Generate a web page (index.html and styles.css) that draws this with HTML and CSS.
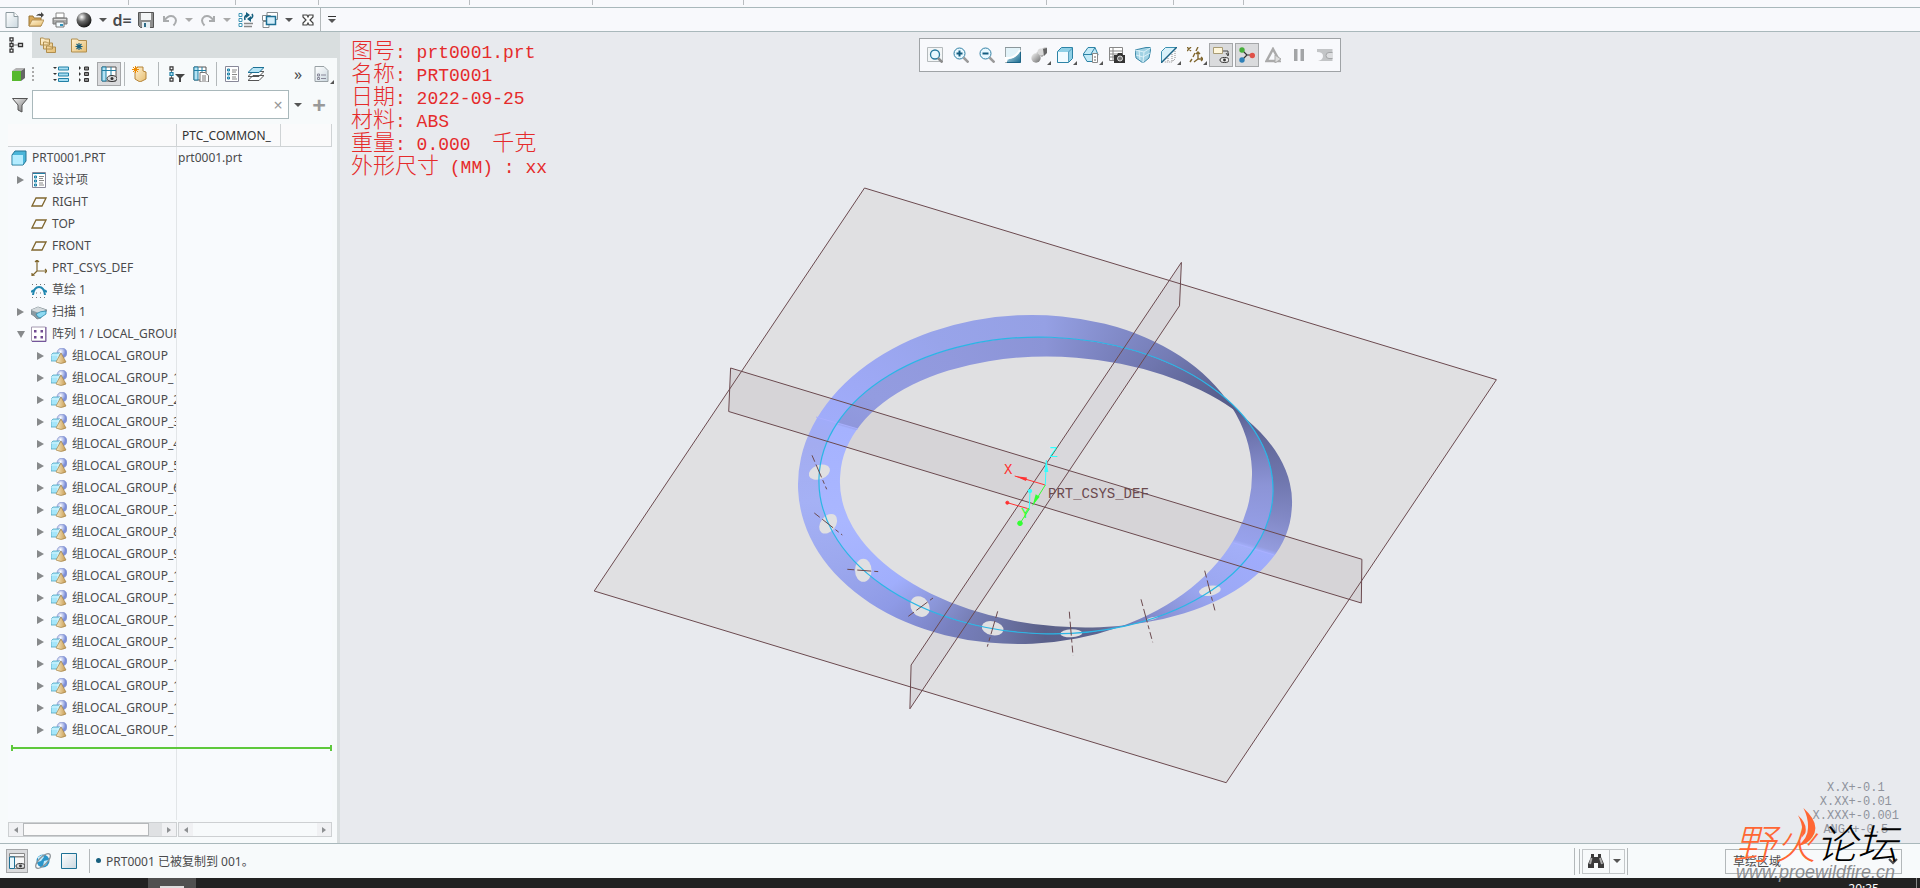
FILE: index.html
```
<!DOCTYPE html>
<html lang="zh-CN">
<head>
  <meta charset="UTF-8" />
  <meta name="viewport" content="width=device-width, initial-scale=1.0"/>
  <title>PRT0001</title>
  <link rel="stylesheet" href="styles.css">
</head>
<body>
  <!-- shared tree icons -->
  <svg class="defs" aria-hidden="true">
    <symbol id="plane" viewBox="0 0 16 16"><path d="M5 4h10l-4 8H1z" fill="none" stroke="#80672f" stroke-width="1.3"/></symbol>
    <symbol id="group" viewBox="0 0 16 16">
      <circle cx="11" cy="5" r="5" fill="url(#ball)" stroke="#8a97cf" stroke-width=".6"/>
      <path d="M0 7l2-2h7v6l-2 2H0z" fill="#a5e6fa" stroke="#4fa3bf" stroke-width=".8"/>
      <path d="M0 7h7v6M7 7l2-2" fill="none" stroke="#e4faff" stroke-width=".8"/>
      <path d="M10 5l5 9q-5 3-10 0z" fill="url(#cone)" stroke="#a58447" stroke-width=".7"/>
    </symbol>
    <defs>
      <radialGradient id="ball" cx=".35" cy=".35"><stop offset="0" stop-color="#fff"/><stop offset="1" stop-color="#7d8fd8"/></radialGradient>
      <linearGradient id="cone"><stop offset="0" stop-color="#fbeecb"/><stop offset="1" stop-color="#c79a50"/></linearGradient>
      <linearGradient id="folder" x2="1" y2="1"><stop offset="0" stop-color="#fff3d5"/><stop offset="1" stop-color="#e6bd70"/></linearGradient>
      <linearGradient id="paper" x2="1" y2="1"><stop offset="0" stop-color="#fff"/><stop offset="1" stop-color="#cbd8e0"/></linearGradient>
      <linearGradient id="metal" x2="1" y2="1"><stop offset="0" stop-color="#f4f4f4"/><stop offset="1" stop-color="#6d6d6d"/></linearGradient>
      <radialGradient id="sphere" cx=".35" cy=".3" r=".7"><stop offset="0" stop-color="#fff"/><stop offset=".45" stop-color="#6b6b6b"/><stop offset="1" stop-color="#1b1b1b"/></radialGradient>
      <linearGradient id="water" x2="1" y2="1"><stop offset="0" stop-color="#dff5fc"/><stop offset="1" stop-color="#1f6f92"/></linearGradient>
    </defs>
  </svg>

  <div class="app">
    <div class="ribbon">
      <span class="w128"></span><span class="w107"></span><span class="w83"></span><span class="w151"></span><span class="w123"></span><span class="w151"></span><span class="w303"></span><span class="w127"></span><span class="w70"></span>
    </div>

    <header class="quickbar">
      <button aria-label="新建"><svg viewBox="0 0 16 16"><path d="M2 .5h8l4 4v11H2z" fill="url(#paper)" stroke="#8b989e"/><path d="M10 .5v4h4" fill="#fff" stroke="#8b989e"/></svg></button>
      <button aria-label="打开"><svg viewBox="0 0 16 16"><path d="M1 14V4h4l1 2h7v8z" fill="#d9aa5c" stroke="#9a7434"/><path d="M1 14l3-6h12l-3 6z" fill="url(#folder)" stroke="#a98444" stroke-width=".8"/><path d="M8 4q2-3 5-2V0l3 3-3 3V4q-3-1-5 0z" fill="#444"/></svg></button>
      <button aria-label="打印"><svg viewBox="0 0 16 16"><path d="M4 1h8v5H4z" fill="#fff" stroke="#888"/><path d="M1 6h14v6H1z" fill="#a9a9a9" stroke="#777"/><path d="M2 7h12v1H2z" fill="#ddd"/><path d="M4 10h8v5H4z" fill="#f2fbff" stroke="#777"/><path d="M8 12h3v2H8z" fill="#2d91bb"/></svg></button>
      <button aria-label="外观"><svg viewBox="0 0 16 16"><circle cx="8" cy="8" r="7.5" fill="url(#sphere)"/></svg></button>
      <button class="caret" aria-label="外观选项"></button>
      <button class="param" aria-label="参数">d=</button>
      <button aria-label="保存"><svg viewBox="0 0 16 16"><path d="M.5.5h15v15h-13l-2-2z" fill="#8f8f8f" stroke="#555"/><path d="M3 1h10v7H3z" fill="#f4f6f7"/><path d="M4 10h8v6H4z" fill="#e6eef2"/><path d="M6 11h2v4H6z" fill="#2d6b87"/></svg></button>
      <button aria-label="撤消"><svg viewBox="0 0 16 16"><path d="M2 4v5h5M2.500 8.500q4-6 9-4 5 3.500 0 9" fill="none" stroke="#a9abad" stroke-width="2"/></svg></button>
      <button class="caret dim" aria-label="撤消列表"></button>
      <button aria-label="重做"><svg viewBox="0 0 16 16"><path d="M14 4v5H9M13.500 8.500q-4-6-9-4-5 3.500 0 9" fill="none" stroke="#a9abad" stroke-width="2"/></svg></button>
      <button class="caret dim" aria-label="重做列表"></button>
      <button aria-label="重新生成"><svg viewBox="0 0 16 16"><path d="M1 1.500h3v3H1zM1 6.500h3v3H1zM1 11.500h3v3H1z" fill="#fff" stroke="#3d94b5"/><path d="M6 11.500h9M6 14.500h8" stroke="#888" stroke-width="1.300"/><path d="M7 8q-1-4 2-5M14 2q2 3-2 5" fill="none" stroke="#17607f" stroke-width="1.600"/><path d="M8 0l4 3-4 3zM13 4v6L9 7z" fill="#17607f"/></svg></button>
      <button aria-label="窗口"><svg viewBox="0 0 16 16"><path d="M5 .5h10.500v7H5zM.5 3.500h8v5h-8zM1 9.500h6v6H1z" fill="#fff" stroke="#858b8e"/><path d="M4.500 4.500h9v8h-9z" fill="#d4eefa" stroke="#1d6f94" stroke-width="1.500"/></svg></button>
      <button class="caret" aria-label="窗口列表"></button>
      <button aria-label="关闭"><svg viewBox="0 0 16 16"><path d="M3 3h4l1 2 1-2h4v2l-3 3 3 3v2H9l-1-2-1 2H3v-2l3-3-3-3z" fill="#fff" stroke="#444" stroke-width="1.200"/></svg></button>
      <i class="sep"></i>
      <button class="caret bar" aria-label="自定义快速访问工具栏"></button>
    </header>

    <main class="work">
      <aside class="panel">
        <nav class="tabs">
          <button class="active" aria-label="模型树"><svg viewBox="0 0 16 16"><path d="M3.500 4v8M4 8h7" stroke="#777" fill="none"/><path d="M2 .8h3v3H2zM2 6.500h3v3H2zM2 12.200h3v3H2zM10.500 6.500h4v3h-4z" fill="#fff" stroke="#333" stroke-width="1.300"/></svg></button>
          <button aria-label="文件夹浏览器"><svg viewBox="0 0 16 16"><path d="M.5 1h3l1 1h5v6h-9zM3.500 5h3l1 1h5v6h-9zM6.500 9h3l1 1h5v5.500h-9z" fill="url(#folder)" stroke="#b08e4e"/></svg></button>
          <button aria-label="收藏夹"><svg viewBox="0 0 16 16"><path d="M.5 2h6l1 1.500h8V15H.5z" fill="url(#folder)" stroke="#b08e4e"/><path d="M8 6v7M4.500 9.500h7M5.500 7l5 5M10.500 7l-5 5" stroke="#17607f" stroke-width="1.100"/></svg></button>
        </nav>

        <div class="tools">
          <button aria-label="显示"><svg viewBox="0 0 16 16"><path d="M2 5h9v10H2z" fill="#57b92e"/><path d="M2 5l4-3h9l-4 3z" fill="#b2b2b2"/><path d="M11 5l4-3v10l-4 3z" fill="#666"/></svg></button>
          <i class="grip"></i>
          <button aria-label="全部展开"><svg viewBox="0 0 16 16"><path d="M5.500 1h10v3h-10zM5.500 7h10v3h-10zM5.500 12.500h10v3h-10z" fill="#a7def3" stroke="#2180a5"/><path d="M0 1h4L2 3zM0 7h4L2 9zM0 13h4l-2 2z" fill="#333"/></svg></button>
          <button aria-label="全部折叠"><svg viewBox="0 0 16 16"><path d="M7.500 1h4v3h-4zM7.500 6.500h4v3h-4zM7.500 12.500h4v3h-4z" fill="#888" stroke="#333"/><path d="M2 0v4l2-2zM2 6v4l2-2zM2 12v4l2-2z" fill="#333"/></svg></button>
          <button class="pressed" aria-label="树列"><svg viewBox="0 0 16 16"><path d="M1 1h14v14H1z" fill="#fff" stroke="#555"/><path d="M1 1h4v14H1z" fill="#b5e3f4" stroke="#2180a5"/><path d="M1 4.500h14M10 1v10" stroke="#2180a5"/><ellipse cx="11" cy="12.500" rx="5" ry="3" fill="#dadbdd" stroke="#333"/><circle cx="11" cy="12.500" r="1.500" fill="#333"/></svg></button>
          <i class="sep"></i>
          <button aria-label="新建元件"><svg viewBox="0 0 16 16"><path d="M5 1h6v4l3 1v7l-6 3-5-3V6z" fill="url(#folder)" stroke="#b58439"/><path d="M3.500 0v7M0 3.500h7M1 1l5 5M6 1L1 6" stroke="#ef8b00"/></svg></button>
          <i class="sep wide"></i>
          <button aria-label="树过滤器"><svg viewBox="0 0 16 16"><path d="M2.500 2v12" stroke="#777"/><path d="M1 .8h3v3H1zM1 12.200h3v3H1z" fill="#fff" stroke="#333" stroke-width="1.200"/><path d="M1 6.500h3v3H1z" fill="#a7def3" stroke="#2180a5" stroke-width="1.200"/><path d="M6 8h10l-4 4v4h-2v-4z" fill="#444"/></svg></button>
          <button aria-label="列显示"><svg viewBox="0 0 16 16"><path d="M1 1h12v13H1z" fill="#fff" stroke="#555"/><path d="M1 1h4v13H1z" fill="#b5e3f4" stroke="#2180a5"/><path d="M1 4.500h12M9 1v5" stroke="#2180a5"/><path d="M7 6.500h5l3.500 3V16H7z" fill="#fff" stroke="#777"/><path d="M9 10h4M9 12h4M9 14h4" stroke="#777"/></svg></button>
          <i class="sep"></i>
          <button aria-label="设计树"><svg viewBox="0 0 16 16"><path d="M1.500.5h13v15h-13z" fill="#fff" stroke="#889"/><path d="M3.500 3h2v2h-2zM3.500 7h2v2h-2zM3.500 11h2v2h-2z" fill="#9bdcf3" stroke="#2180a5"/><path d="M8 4h5M8 6h4M8 8.500h5M8 11h4M8 13h5" stroke="#888"/></svg></button>
          <button aria-label="层树"><svg viewBox="0 0 16 16"><path d="M5 9.500h11l-5 5H0zM5 5.500h11l-5 5H0z" fill="#fff" stroke="#555"/><path d="M5 1.500h11l-5 5H0z" fill="#b8e5f5" stroke="#1d7195"/></svg></button>
          <button class="more" aria-label="更多">»</button>
          <button class="menu" aria-label="设置"><svg viewBox="0 0 16 16"><path d="M1 .5h9l4 4v11H1z" fill="url(#paper)" stroke="#98a0a4"/><path d="M3.500 8h2v2h-2zM3.500 11.500h2v2h-2zM7 9h5M7 12.500h5" fill="none" stroke="#889"/></svg></button>
        </div>

        <div class="filter">
          <svg viewBox="0 0 16 16"><path d="M.5 1.500h15L10 8v7l-4-2V8z" fill="url(#metal)" stroke="#555"/></svg>
          <div class="field">
            <input type="text" aria-label="搜索模型树">
            <button aria-label="清除">×</button>
          </div>
          <button class="caret" aria-label="搜索历史"></button>
          <button class="plus" aria-label="添加">+</button>
        </div>

        <div class="tree">
          <table>
            <thead>
              <tr><th class="c1"></th><th class="c2"><div>PTC_COMMON_</div></th><th class="c3"></th></tr>
            </thead>
            <tbody id="treeBody"></tbody>
          </table>
          <div class="insert"></div>
        </div>
        <div class="scrolls">
          <div class="scroll left"><button class="prev" aria-label="向左"></button><span class="thumb"></span><button class="next" aria-label="向右"></button></div>
          <div class="scroll right"><button class="prev" aria-label="向左"></button><button class="next" aria-label="向右"></button></div>
        </div>
      </aside>

      <section class="viewport">
        <svg class="model" viewBox="340 32 1580 811">
          <defs>
            <clipPath id="ringA"><path clip-rule="evenodd" d="M798.1 489.9A227.1 164.3 -2.62 1 1 1251.9 469.1A227.1 164.3 -2.62 1 1 798.1 489.9ZM819 477.700A227.1 148.300 1.96 1 1 1273 493.300A227.1 148.300 1.96 1 1 819 477.700Z"/></clipPath>
            <clipPath id="ringB"><path clip-rule="evenodd" d="M840.3 474.4A226.4 133.2 4.47 1 1 1291.7 509.6A226.4 133.2 4.47 1 1 840.3 474.4ZM819 477.700A227.1 148.300 1.96 1 1 1273 493.300A227.1 148.300 1.96 1 1 819 477.700Z"/></clipPath>
          </defs>
          <!-- datum planes -->
          <path d="M864.500 188L1496.400 379.700 1226.200 782.700 594.200 591z" fill="#e0e0e2"/>
          <path d="M1181.400 262.400L1179.500 305.800 909.900 708.800 911.100 665z" fill="#d9d8dc"/>
          <path d="M730.600 368L1361.900 559.300 1361.300 603 728.700 411.500z" fill="#d6d4d7"/>
          <!-- ring -->
          <foreignObject x="790" y="300" width="510" height="360" clip-path="url(#ringA)"><div class="shade outer"></div></foreignObject>
          <foreignObject x="790" y="300" width="510" height="360" clip-path="url(#ringB)"><div class="shade inner"></div></foreignObject>
          <path d="M816 417l42 12M1234 543l40 12" stroke="#a9b0ff" fill="none"/>
          <g fill="#e0e0e2">
            <ellipse cx="819.300" cy="472.300" rx="11" ry="7" transform="rotate(-20 819 472)"/>
            <ellipse cx="828.300" cy="524" rx="11" ry="7.500" transform="rotate(-52 828 524)"/>
            <ellipse cx="863.300" cy="570.300" rx="8.300" ry="11.500"/>
            <ellipse cx="920.300" cy="606.700" rx="9" ry="11" transform="rotate(-35 920 607)"/>
            <ellipse cx="992.700" cy="628.300" rx="11" ry="7" transform="rotate(12 993 628)"/>
            <ellipse cx="1071.300" cy="633.300" rx="11" ry="4" transform="rotate(-2 1071 633)"/>
            <ellipse cx="1152" cy="618.500" rx="6" ry="1.200" transform="rotate(-14 1152 618)"/>
            <ellipse cx="1210" cy="590.700" rx="11" ry="5" transform="rotate(-10 1210 591)"/>
          </g>
          <path d="M819 477.700A227.1 148.300 1.96 1 1 1273 493.300A227.1 148.300 1.96 1 1 819 477.700Z" fill="none" stroke="#29b6e6" stroke-width="1.200"/>
          <g fill="none" stroke="#6b4a4f">
            <path d="M864.500 188L1496.400 379.700 1226.200 782.700 594.200 591z"/>
            <path d="M1181.400 262.400L1179.500 305.800 909.900 708.800 911.100 665z"/>
            <path d="M730.600 368L1361.900 559.300 1361.300 603 728.700 411.500z"/>
            <path stroke-dasharray="7 3 14 3 4 3" d="M812 455.300l14.700 34M814.300 513l28 22M847.300 569.300l32 2.400M908.300 616.300L933 598M997.700 611.300l-10.400 35.400M1069.300 611.700l3.700 44M1141 599.300l11.700 43M1204.700 570.700l10.300 40"/>
          </g>
          <!-- coordinate systems -->
          <g stroke="#ff3232" fill="#ff3232"><path d="M1045.300 485L1014.700 476M1029.300 509L1007.300 502.700"/><path d="M1015 476l12 1.500-1 3.500z" stroke="none"/><circle cx="1007.300" cy="502.700" r="1.500"/></g>
          <g stroke="#32ff32" fill="#32ff32"><path d="M1045.300 485L1032.700 505.300M1029.300 509L1020 523.300"/><path d="M1032.700 505.300l3-11 4 2.500z" stroke="none"/><circle cx="1020" cy="523.300" r="2.300"/></g>
          <g stroke="#32ffff" fill="#32ffff"><path d="M1045.300 485L1046.300 460M1029.300 509L1030 491"/><path d="M1046.300 460l2 12h-4z" stroke="none"/><circle cx="1030" cy="491" r="1.700"/></g>
          <text x="1004" y="474" fill="#ff3232">X</text>
          <text x="1021" y="518" fill="#32ff32">Y</text>
          <text x="1049" y="457" fill="#32ffff">Z</text>
          <text x="1048" y="498" fill="#6b4a4f">PRT_CSYS_DEF</text>
        </svg>

        <div class="notes">
          <p><span>图号</span>: prt0001.prt</p>
          <p><span>名称</span>: PRT0001</p>
          <p><span>日期</span>: 2022-09-25</p>
          <p><span>材料</span>: ABS</p>
          <p><span>重量</span>: 0.000  <span>千克</span></p>
          <p><span>外形尺寸</span> (MM) : xx</p>
        </div>

        <div class="viewbar">
          <button aria-label="重新调整"><svg viewBox="0 0 16 16"><path d="M.5.5h15v14H.5z" fill="#f3f6f7" stroke="#b5babc"/><circle cx="8" cy="7.500" r="4.500" fill="#e8f8ff" stroke="#26789d" stroke-width="1.300"/><path d="M11 11l4.500 4.500" stroke="#8c8c8c" stroke-width="2.500"/></svg></button>
          <button aria-label="放大"><svg viewBox="0 0 16 16"><circle cx="6.500" cy="6.500" r="5.500" fill="#e8f8ff" stroke="#2f7fa3"/><path d="M3.500 6.500h6M6.500 3.500v6" stroke="#145d80" stroke-width="2"/><path d="M10.500 10.500l5 5" stroke="#9a9a9a" stroke-width="2.500"/></svg></button>
          <button aria-label="缩小"><svg viewBox="0 0 16 16"><circle cx="6.500" cy="6.500" r="5.500" fill="#e8f8ff" stroke="#2f7fa3"/><path d="M3.500 6.500h6" stroke="#145d80" stroke-width="2"/><path d="M10.500 10.500l5 5" stroke="#9a9a9a" stroke-width="2.500"/></svg></button>
          <button aria-label="重画"><svg viewBox="0 0 16 16"><path d="M.5.5h15v15H.5z" fill="#e3f3f9" stroke="#9aa5a9"/><path d="M1 15l3-3q8-1 11-9v12z" fill="url(#water)"/><path d="M1 15v-4q9 1 14-8" fill="none" stroke="#fff" stroke-width="2"/><path d="M0 .5h16" stroke="#8b979b"/><path d="M2 15.500h13.500V5" fill="none" stroke="#1d6587"/></svg></button>
          <button class="menu" aria-label="渲染选项"><svg viewBox="0 0 16 16"><path d="M5 6l4-3 4-2.500h3V5l-5 5z" fill="url(#metal)"/><circle cx="10" cy="5" r="3.500" fill="#d9d9d9"/><path d="M12 2l4-1v5l-3 3z" fill="#666"/><circle cx="5" cy="11" r="4.700" fill="url(#metal)"/></svg></button>
          <button class="menu" aria-label="显示样式"><svg viewBox="0 0 16 16"><path d="M.5 4.500l4-4h11v11l-4 4H.5z" fill="#8fd0e6" stroke="#2d83a6"/><path d="M1 5h10.500v10H1z" fill="#f1fbff"/><path d="M11.500 15V5l4-4" fill="none" stroke="#2d83a6" stroke-width=".7"/></svg></button>
          <button class="menu" aria-label="已保存方向"><svg viewBox="0 0 16 16"><path d="M5 .5h7l3 7-3 7H4l-4-7z" fill="#c3eaf7" stroke="#2d83a6"/><path d="M0 7.500h15M8 7L12 .5" stroke="#2d83a6"/><path d="M9.500 6.500h5v9h-5z" fill="#fff" stroke="#888"/><path d="M11 10h2M11 13h2" stroke="#666"/></svg></button>
          <button aria-label="视图管理器"><svg viewBox="0 0 16 16"><path d="M.5.5h13v13H.5zM.5 4h13M.5 7h13M.5 10h13M4 .5v13" fill="#fff" stroke="#888"/><path d="M5 8h3l1-2h4l1 2h2v8H5z" fill="#333"/><circle cx="11" cy="11.500" r="2.500" fill="#777" stroke="#fff" stroke-width=".8"/></svg></button>
          <button aria-label="透视图"><svg viewBox="0 0 16 16"><path d="M0 3l11-2.500h5L14 11l-6 5-7-5z" fill="#a1d2e4" stroke="#3a87a7"/><path d="M0 3l9 2 7-4.500M9 5l-1 11M4 3l1 10M1 8l7 2 7-4" fill="none" stroke="#e9f8fd" stroke-width=".8"/></svg></button>
          <button class="menu" aria-label="截面"><svg viewBox="0 0 16 16"><path d="M.5 4.500l4-4h11L.5 15.500z" fill="#d8f1fa" stroke="#3b8fb0"/><path d="M0 16L16 0" stroke="#1c6284" stroke-width="1.500"/><path d="M14 4v8l-3 3H3M11 7v7M7 11v4" stroke="#888" stroke-dasharray="1 1" fill="none"/></svg></button>
          <button class="menu" aria-label="基准显示"><svg viewBox="0 0 16 16"><path d="M0 0l4 4M4 0L0 4M11 0L9 4M8 6l-2 4M5 12l-2 3M11 5v7h5M11 12l-4 3M9 7l2-2 2 2M14 10l2 2-2 2" fill="none" stroke="#80672f" stroke-width="1.400"/></svg></button>
          <button class="pressed" aria-label="注释显示"><svg viewBox="0 0 16 16"><path d="M.5.5h9v6h-9z" fill="#fff7dc" stroke="#a99c75"/><path d="M10 4h5v4M13 6l2 3 1-3" fill="none" stroke="#444"/><ellipse cx="11.500" cy="13" rx="4.500" ry="2.500" fill="#eee" stroke="#333"/><circle cx="11.500" cy="13" r="1.400" fill="#333"/></svg></button>
          <button class="pressed" aria-label="旋转中心"><svg viewBox="0 0 16 16"><path d="M3 3l5 5-5 5M8 8h6" fill="none" stroke="#333" stroke-width="1.200"/><circle cx="3" cy="3" r="2.700" fill="#47ae3a"/><circle cx="3" cy="13" r="2.700" fill="#2e80b8"/><circle cx="13.300" cy="8.500" r="2.700" fill="#e05148"/></svg></button>
          <button disabled aria-label="仿真"><svg viewBox="0 0 16 16"><path d="M8 2l6.500 12h-13z" fill="none" stroke="#aaa" stroke-width="2.500"/><path d="M10 8l6 4-6 4z" fill="#ddd" stroke="#aaa"/></svg></button>
          <button disabled aria-label="暂停"><svg viewBox="0 0 16 16"><path d="M3 2h3.500v12H3zM9.500 2H13v12H9.500z" fill="#a3a5a7"/></svg></button>
          <button disabled aria-label="停止"><svg viewBox="0 0 16 16"><path d="M0 2h15.500v12H1q5-1 5-5T0 5z" fill="#c3c5c7"/><path d="M15.500 5.500H12q-3 0-3 3t3 3h3.500" fill="#dcdddf" stroke="#a3a5a7"/></svg></button>
        </div>

        <div class="tolerance">
          <p>X.X+-0.1</p>
          <p>X.XX+-0.01</p>
          <p>X.XXX+-0.001</p>
          <p>ANG.+-0.5</p>
        </div>
      </section>
    </main>

    <footer class="status">
      <button class="pressed" aria-label="显示导航器"><svg viewBox="0 0 16 16"><path d="M.5.5h15v3H.5zM6 4h9.500v11.500H6" fill="#f6f6f6" stroke="#888"/><path d="M.5 4h5v11.500h-5z" fill="#e8f6fb" stroke="#1d6f94"/><ellipse cx="11.500" cy="13" rx="4.500" ry="2.500" fill="#dadbdd" stroke="#333"/><circle cx="11.500" cy="13" r="1.400" fill="#333"/></svg></button>
      <button aria-label="浏览器"><svg viewBox="0 0 16 16"><circle cx="8" cy="8" r="6.500" fill="#2b95c9"/><path d="M3 4l4-2 2 2-3 4-3 1zM9 8l4-1-2 5-3 1z" fill="#c3ecfb"/><ellipse cx="8" cy="8" rx="9.500" ry="4" fill="none" stroke="#8d9498" stroke-width="1.300" transform="rotate(-45 8 8)"/></svg></button>
      <button aria-label="全屏"><svg viewBox="0 0 16 16"><path d="M.5.5h15v15H.5z" fill="url(#paper)" stroke="#1d7195"/></svg></button>
      <i class="sep"></i>
      <p class="message">PRT0001 已被复制到 001。</p>
      <div class="find">
        <button aria-label="查找"><svg viewBox="0 0 16 16"><path d="M3 1h3v3h4V1h3v3l3 7v4h-6v-5H6v5H0v-4l3-7z" fill="#3a3a3a"/><path d="M3.500 5L2 11M12 5l2 6" stroke="#aaa" stroke-width="2"/></svg></button>
        <button class="caret" aria-label="查找选项"></button>
      </div>
      <select aria-label="选择过滤器"><option>草绘区域</option></select>
    </footer>

    <div class="taskbar">
      <button aria-label="当前应用"><i></i></button>
      <time>20:35</time>
    </div>
  </div>

  <div class="watermark">
    <div class="mark"><b>野火</b>论坛
      <svg viewBox="0 0 20 42"><path d="M6 0q20 18 10 32-5 8-16 10 11-9 11-19Q12 12 6 0zM0 8q11 10 8 20l-4 5q3-12-4-25z" fill="#ff6633"/></svg>
    </div>
    <a href="#">www.proewildfire.cn</a>
  </div>

  <script>
    const icons = {
      part: '<path d="M1 5l3-4h11v10l-3 4H1z" fill="#4ab5d9" stroke="#267594"/><path d="M1.500 5H12v9.500H1.500z" fill="#b4ecff"/>',
      design: '<path d="M1.500.5h13v15h-13z" fill="#fff" stroke="#889"/><path d="M2 1.500h12" stroke="#2180a5"/><path d="M3.500 4h2v2h-2zM3.500 8h2v2h-2zM3.500 12h2v2h-2z" fill="#9bdcf3" stroke="#2180a5"/><path d="M8 4.500h5M8 6.500h4M8 8.500h5M8 11h4M8 13h5" stroke="#888"/>',
      csys: '<path d="M6 0v11h10M6 11l-5 5M4 2l2-2 2 2M1 13v3h3M14 9l2 2-2 2" fill="none" stroke="#80672f" stroke-width="1.200"/>',
      sketch: '<path d="M2 13q1-8 6-8t6 8M3 8l-3 2M13 8l3 2" fill="none" stroke="#2187b0" stroke-width="2"/><path d="M1 2.500h14M1 15.500h14M5 11h7" stroke="#777" stroke-dasharray="1 3"/>',
      sweep: '<path d="M0 6l7-3 9 3-2 3-4 1v4l-4 1-3-3-3-2z" fill="#8b9aa1" stroke="#6f7d83" stroke-width=".7"/><path d="M0 6l7-3 8 3-7 3z" fill="#d3d9dc"/><path d="M5 10q4-3 10-3v3l-6 4q-3-1-4-4z" fill="#8edaf2" stroke="#2a86a8" stroke-width=".8"/>',
      pattern: '<path d="M.5 1h14v14H.5z" fill="#fff" stroke="#a59ab0"/><path d="M15 1v14.500H1" fill="none" stroke="#74559b"/><path d="M3 4h2.500v2.500H3zM9.500 4H12v2.500H9.500zM3 10h2.500v2.500H3zM9.500 10H12v2.500H9.500z" fill="#704a92"/>'
    };

    const rows = [
      { name: "PRT0001.PRT", icon: "part", level: 0, value: "prt0001.prt" },
      { name: "设计项", icon: "design", level: 1, arrow: "closed" },
      { name: "RIGHT", use: "plane", level: 1 },
      { name: "TOP", use: "plane", level: 1 },
      { name: "FRONT", use: "plane", level: 1 },
      { name: "PRT_CSYS_DEF", icon: "csys", level: 1 },
      { name: "草绘 1", icon: "sketch", level: 1 },
      { name: "扫描 1", icon: "sweep", level: 1, arrow: "closed" },
      { name: "阵列 1 / LOCAL_GROUP", icon: "pattern", level: 1, arrow: "open" }
    ];
    for (let i = 0; i < 18; i++) {
      rows.push({ name: "组LOCAL_GROUP" + (i ? "_" + i : ""), use: "group", level: 2, arrow: "closed" });
    }

    document.getElementById("treeBody").innerHTML = rows.map(row => `
      <tr>
        <td><div class="node level${row.level}">
          ${row.level ? `<i class="arrow ${row.arrow || ""}"></i>` : ""}
          <svg viewBox="0 0 16 16">${row.use ? `<use href="#${row.use}"/>` : icons[row.icon]}</svg>
          <span>${row.name}</span>
        </div></td>
        <td class="value">${row.value || ""}</td>
        <td></td>
      </tr>`).join("");
  </script>
</body>
</html>
```
FILE: styles.css
```
:root {
  --bar: #f8f9fc;
  --panel: #f7fafb;
  --line: #a9b8bb;
  --text: #4a4a4c;
}

* {
  box-sizing: border-box;
}

body {
  margin: 0;
  font-family: "Noto Sans", "Noto Sans CJK SC", sans-serif;
  font-size: 12px;
  color: var(--text);
  overflow: hidden;
}

p {
  margin: 0;
}

button {
  display: flex;
  align-items: center;
  justify-content: center;
  padding: 0;
  border: 0;
  background: none;
  color: inherit;
  font: inherit;
}

svg {
  width: 16px;
  height: 16px;
  flex: none;
}

.defs {
  position: absolute;
  width: 0;
  height: 0;
}

.app {
  display: flex;
  flex-direction: column;
  height: 100vh;
}

.ribbon {
  display: flex;
  flex: none;
  height: 8px;
  padding-bottom: 2px;
  background: var(--bar);
  border-bottom: 1px solid var(--line);
}

.ribbon span {
  border-right: 1px solid #b9bdc0;
}

.w128 { width: 129px; }
.w107 { width: 107px; }
.w83 { width: 83px; }
.w151 { width: 151px; }
.w123 { width: 123px; }
.w303 { width: 303px; }
.w127 { width: 127px; }
.w70 { width: 70px; }

.quickbar {
  display: flex;
  flex: none;
  height: 24px;
  background: var(--bar);
  border-bottom: 1px solid var(--line);
}

.quickbar button {
  width: 24px;
}

.quickbar .param {
  font-size: 16px;
  font-weight: 600;
}

.quickbar .caret {
  width: 14px;
}

.quickbar .caret.bar {
  width: 22px;
  flex-direction: column;
  gap: 2px;
}

.caret.bar::before {
  content: "";
  width: 8px;
  height: 1px;
  background: #333;
}

.caret {
  width: 14px;
}

.caret::after {
  content: "";
  border: 4px solid transparent;
  border-top-color: #555;
  border-bottom: 0;
}

.caret.dim::after {
  border-top-color: #aaa;
}

.sep {
  width: 1px;
  background: #b3b8ba;
}

.work {
  display: flex;
  flex: 1;
  min-height: 0;
}

.panel {
  display: flex;
  flex-direction: column;
  flex: none;
  width: 340px;
  background: var(--panel);
  border-right: 3px solid #d9dedf;
}

.tabs {
  display: flex;
  height: 26px;
  margin-right: -3px;
  background: #d9dedf;
}

.tabs button {
  width: 31px;
}

.tabs .active {
  width: 32px;
  background: var(--panel);
}

.tools {
  display: flex;
  height: 32px;
  padding: 4px 3px 4px 6px;
}

.tools button {
  width: 24px;
}

.tools .sep {
  margin: 0 3px;
}

.tools .sep.wide {
  margin: 0 6px;
}

.grip {
  margin: 5px 15px 5px 2px;
  border-left: 2px dotted #aaa;
}

.pressed {
  background: #dadbdd;
  border: 1px solid #a5a7a9;
}

.tools .more {
  margin-left: auto;
  font-size: 16px;
}

.menu {
  position: relative;
}

.menu::after {
  content: "";
  position: absolute;
  right: 0;
  bottom: 2px;
  border: 2px solid #555;
  border-top-color: transparent;
  border-left-color: transparent;
}

.filter {
  display: flex;
  align-items: center;
  height: 29px;
  padding-left: 12px;
}

.field {
  display: flex;
  width: 257px;
  height: 29px;
  margin: 0 2px 0 4px;
  background: #fff;
  border: 1px solid var(--line);
}

.field input {
  flex: 1;
  min-width: 0;
  padding: 0 6px;
  border: 0;
  outline: 0;
  font: inherit;
}

.field button {
  width: 20px;
  color: #999;
  font-size: 16px;
}

.filter .plus {
  width: 28px;
  color: #999;
  font-size: 24px;
  font-weight: bold;
}

.tree {
  flex: 1;
  min-height: 0;
  margin: 5px 5px 0 8px;
  background: linear-gradient(#e2e5e8, #e2e5e8) 168px 0 / 1px 100% no-repeat #f8fafd;
}

table {
  width: 100%;
  table-layout: fixed;
  border-collapse: separate;
  border-spacing: 0;
}

th {
  height: 23px;
  padding: 0;
  background: #fafafb;
  border-right: 1px solid #cfd3d5;
  border-bottom: 1px solid #cfd3d5;
  color: #333;
  font-weight: normal;
  text-align: left;
}

th div {
  margin: 0 4px 0 5px;
  overflow: hidden;
}

.c1 { width: 169px; }
.c2 { width: 104px; }

td {
  height: 22px;
  padding: 0;
  line-height: 22px;
  white-space: nowrap;
}

.value {
  padding-left: 1px;
}

.node {
  display: flex;
  align-items: center;
  height: 22px;
  overflow: hidden;
  padding-left: 3px;
  margin-right: 1px;
}

.node.level2 {
  padding-left: 23px;
}

.node svg {
  margin-right: 5px;
}

.node .arrow {
  width: 20px;
  display: flex;
  flex: none;
  padding-left: 6px;
}

.arrow.closed::before {
  content: "";
  border: 4px solid transparent;
  border-left: 7px solid #87898b;
  border-right: 0;
}

.arrow.open::before {
  content: "";
  border: 4px solid transparent;
  border-top: 7px solid #87898b;
  border-bottom: 0;
}

.insert {
  height: 6px;
  margin: 4px 0 0 3px;
  border-left: 2px solid #5ec83c;
  border-right: 2px solid #5ec83c;
  background: linear-gradient(#5ec83c, #5ec83c) 0 2px / 100% 2px no-repeat;
}

.scrolls {
  display: flex;
  gap: 1px;
  margin: 2px 5px 6px 8px;
}

.scroll {
  display: flex;
  justify-content: space-between;
  height: 15px;
  background: #dfe1e3;
  border: 1px solid #cdd0d2;
}

.scroll.left {
  width: 169px;
}

.scroll.right {
  flex: 1;
  background: var(--panel);
}

.scroll button {
  width: 14px;
  background: #f0f1f3;
}

.thumb {
  width: 126px;
  margin-right: auto;
  background: #fafafa;
  border: 1px solid #b5b8ba;
}

.prev::before,
.next::before {
  content: "";
  border: 3px solid transparent;
}

.prev::before {
  border-right: 4px solid #8d9092;
  border-left: 0;
}

.next::before {
  border-left: 4px solid #8d9092;
  border-right: 0;
}

.viewport {
  position: relative;
  display: flex;
  flex-direction: column;
  align-items: center;
  flex: 1;
  min-width: 0;
  padding-top: 6px;
  background: #e8eaee;
}

.model {
  position: absolute;
  inset: 0;
  width: 100%;
  height: 100%;
}

.model text {
  font-family: "Liberation Mono", monospace;
  font-size: 14px;
}

.shade {
  width: 510px;
  height: 360px;
}

/* both gradients turn around the ring centre */
.outer {
  background: conic-gradient(from 0deg at 255px 185px,
    #95a0e4 0deg, #747cb5 44deg, #555b88 67deg, #6f76b0 77deg, #8c94d6 90deg,
    #98a2ec 106deg, #a3aff8 107deg, #99a5ee 125deg, #8088c8 143deg, #5c6390 160deg,
    #5a608a 180deg, #6d75a8 196deg, #7880bf 214deg, #8e9ae6 232deg, #9ca8ee 249deg,
    #a5b1f5 266deg, #a3acf0 280deg, #a0acfa 287deg, #9ea9f6 298deg, #98a4ea 323deg, #95a0e4 360deg);
}

.inner {
  background: conic-gradient(from 0deg at 255px 185px,
    #8b94d6 0deg, #6f76ae 42deg, #555b88 67deg, #5d6394 75deg, #7077ae 89deg,
    #8289c6 98deg, #949cde 106deg, #a0acfc 107deg, #9ca9f6 121deg, #8890d2 140deg,
    #62688f 160deg, #5a6088 180deg, #7880b8 210deg, #a0aefc 237deg, #aab7ff 260deg,
    #a5b2ff 286deg, #8f97dc 287deg, #939ce0 297deg, #9199dd 323deg, #8b94d6 360deg);
}

.notes {
  position: absolute;
  left: 11px;
  top: 5px;
  color: #e52b2b;
  font-family: "Liberation Mono", "Noto Sans CJK SC", monospace;
  font-size: 18px;
  line-height: 23px;
}

.notes p {
  height: 23px;
  white-space: pre;
}

.notes span {
  font-family: "Noto Sans CJK SC", sans-serif;
  font-size: 22px;
  font-weight: 300;
}

.viewbar {
  position: relative;
  display: flex;
  gap: 2px;
  padding: 4px 3px;
  background: var(--bar);
  border: 1px solid #9fa3a6;
}

.viewbar button {
  width: 24px;
  height: 24px;
}

.tolerance {
  position: absolute;
  right: 21px;
  bottom: 6px;
  color: #8f939c;
  font-family: "Liberation Mono", monospace;
  font-size: 12px;
  line-height: 14px;
  text-align: center;
}

.status {
  display: flex;
  align-items: center;
  flex: none;
  height: 35px;
  padding: 0 18px 0 6px;
  background: var(--panel);
  border-top: 1px solid var(--line);
}

.status > button {
  width: 26px;
  height: 24px;
}

.status > .pressed {
  width: 22px;
  margin-right: 2px;
}

.status > .sep {
  height: 24px;
  margin: 0 6px 0 7px;
}

.message::before {
  content: "";
  display: inline-block;
  width: 5px;
  height: 5px;
  margin-right: 5px;
  border-radius: 50%;
  background: #17607f;
  vertical-align: 3px;
}

.find {
  display: flex;
  margin: 0 97px 0 auto;
  height: 27px;
  padding: 1px 2px;
  border-left: 1px solid #b3b8ba;
  border-right: 1px solid #b3b8ba;
}

.find::before {
  content: "";
  margin-right: 2px;
  padding-left: 2px;
  border-right: 1px solid #b3b8ba;
}

.find button {
  width: 28px;
  border: 1px solid #c3c7c9;
}

.find .caret {
  width: 15px;
  border-left: 0;
}

select {
  width: 177px;
  height: 25px;
  padding: 0 3px;
  border: 1px solid #b3b8ba;
  border-radius: 0;
  background: #f8fafb;
  color: inherit;
  font: inherit;
}

.taskbar {
  display: flex;
  flex: none;
  height: 10px;
  padding: 0 41px 0 148px;
  overflow: hidden;
  background: #222;
  color: #fff;
}

.taskbar button {
  align-items: flex-end;
  width: 48px;
  background: #505050;
}

.taskbar i {
  width: 24px;
  height: 2px;
  background: #ddd;
}

.taskbar time {
  margin-left: auto;
  padding-top: 2px;
  height: 17px;
}

.taskbar::after {
  content: "";
  width: 1px;
  margin: 0 -38px 0 37px;
  background: #888;
}

.watermark {
  position: absolute;
  right: 18px;
  bottom: 8px;
  width: 168px;
}

.mark {
  position: relative;
  display: flex;
  color: #000;
  font-size: 41px;
  font-style: italic;
  font-weight: 300;
  line-height: 42px;
  white-space: nowrap;
}

.mark b {
  color: #ff6633;
  font-weight: 300;
}

.mark svg {
  position: absolute;
  left: 64px;
  top: -16px;
  width: 18px;
  height: 42px;
}

.watermark a {
  display: block;
  padding-left: 2px;
  color: #8b8d90;
  font-family: "Liberation Sans", sans-serif;
  font-size: 18px;
  font-style: italic;
  line-height: 16px;
  text-decoration: none;
}
```
